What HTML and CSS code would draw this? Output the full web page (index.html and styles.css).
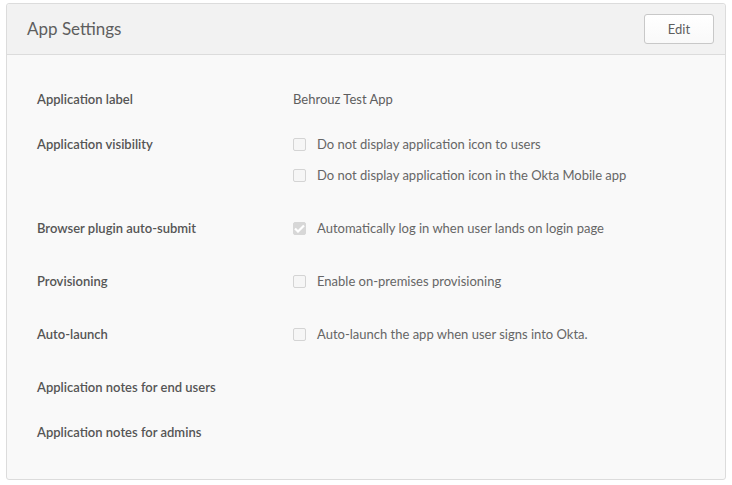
FILE: index.html
```html
<!DOCTYPE html>
<html lang="en">
<head>
    <meta charset="UTF-8">
    <meta name="viewport" content="width=device-width, initial-scale=1.0">
    <title>App Settings</title>
    <link rel="stylesheet" href="styles.css">
</head>
<body>
    <div class="panel">
        <div class="panel-header">
            <h2>App Settings</h2>
            <button type="button" class="edit-btn">Edit</button>
        </div>

        <div class="panel-body">
            <div class="field">
                <div class="field-label">Application label</div>
                <div class="field-value">Behrouz Test App</div>
            </div>

            <div class="field checks">
                <div class="field-label">Application visibility</div>
                <div class="field-value">
                    <label class="check"><span class="box"></span>Do not display application icon to users</label>
                    <label class="check"><span class="box"></span>Do not display application icon in the Okta Mobile app</label>
                </div>
            </div>

            <div class="field checks">
                <div class="field-label">Browser plugin auto-submit</div>
                <div class="field-value">
                    <label class="check">
                        <span class="box checked">
                            <svg width="11" height="9" viewBox="0 0 11 9"><path d="M1 4.5 L4 7.5 L10 1.5" fill="none" stroke="#fff" stroke-width="2.2"/></svg>
                        </span>Automatically log in when user lands on login page
                    </label>
                </div>
            </div>

            <div class="field checks">
                <div class="field-label">Provisioning</div>
                <div class="field-value">
                    <label class="check"><span class="box"></span>Enable on-premises provisioning</label>
                </div>
            </div>

            <div class="field checks">
                <div class="field-label">Auto-launch</div>
                <div class="field-value">
                    <label class="check"><span class="box"></span>Auto-launch the app when user signs into Okta.</label>
                </div>
            </div>

            <div class="field">
                <div class="field-label">Application notes for end users</div>
                <div class="field-value"></div>
            </div>

            <div class="field">
                <div class="field-label">Application notes for admins</div>
                <div class="field-value"></div>
            </div>
        </div>
    </div>
</body>
</html>
```

FILE: styles.css
```css
* {
    margin: 0;
    padding: 0;
    box-sizing: border-box;
}

body {
    font-family: Lato, "Open Sans", Arial, sans-serif;
    background: white;
    padding: 3px 6px;
    color: #5e5e5e;
}

.panel {
    width: 720px;
    border: 1px solid #dcdcdc;
    border-radius: 3px;
    background: #f9f9f9;
}

.panel-header {
    height: 51px;
    display: flex;
    align-items: center;
    justify-content: space-between;
    padding: 0 11px 0 20px;
    background: #f2f2f2;
    border-bottom: 1px solid #dcdcdc;
    border-radius: 3px 3px 0 0;
}

h2 {
    font-size: 17px;
    font-weight: normal;
    color: #5e5e5e;
    margin-top: -2px;
}

.edit-btn {
    width: 70px;
    height: 30px;
    font-family: inherit;
    font-size: 13px;
    color: #5e5e5e;
    background: linear-gradient(#fff, #f9f9f9);
    border: 1px solid #c8c8c8;
    border-radius: 3px;
    cursor: pointer;
}

.panel-body {
    padding: 34px 30px 37px 30px;
}

.field {
    display: grid;
    grid-template-columns: 256px 1fr;
    margin-bottom: 25px;
    font-size: 13px;
    line-height: 20px;
}

.field.checks {
    margin-bottom: 33px;
}

.field:last-child {
    margin-bottom: 0;
}

.field-label {
    font-weight: 600;
    color: #555;
}

.field-value {
    display: flex;
    flex-direction: column;
    gap: 11px;
    color: #5e5e5e;
}

.check {
    display: flex;
    align-items: center;
    color: #666;
}

.box {
    width: 13px;
    height: 13px;
    margin-right: 11px;
    border: 1px solid #d4d4d4;
    border-radius: 2px;
    background: #f6f6f6;
    display: flex;
    align-items: center;
    justify-content: center;
}

.box.checked {
    background: #d7d7d7;
    border-color: #d7d7d7;
}
```
